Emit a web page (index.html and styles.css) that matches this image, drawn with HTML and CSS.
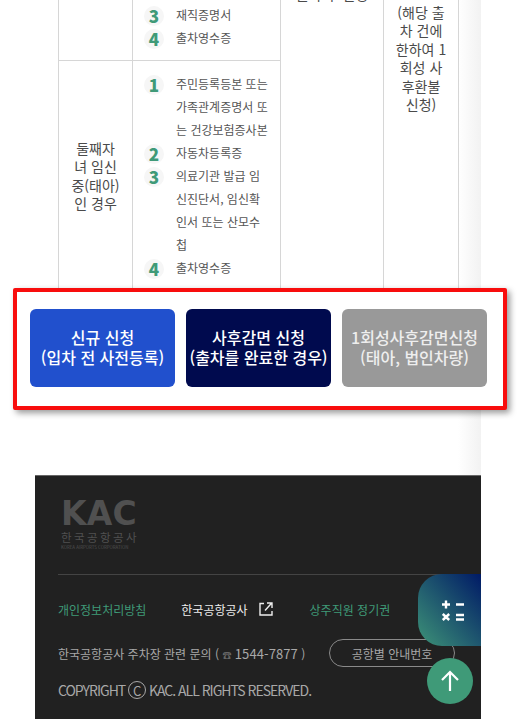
FILE: index.html
```html
<!DOCTYPE html>
<html lang="ko">
<head>
<meta charset="utf-8">
<title>한국공항공사 주차장</title>
<link rel="stylesheet" href="styles.css">
</head>
<body>
<div class="page">
  <main class="main">
    <div class="table-wrap">
      <table class="doc-table">
        <colgroup><col class="c1"><col class="c2"><col class="c3"><col class="c4"></colgroup>
        <tr>
          <td></td>
          <td>
            <ol class="docs">
              <li><b>3</b><span>재직증명서</span></li>
              <li><b>4</b><span>출차영수증</span></li>
            </ol>
          </td>
          <td rowspan="2" class="top"><div class="note-up">출차 후 신청</div></td>
          <td rowspan="2" class="top"><div class="note-refund">(해당 출차 건에 한하여 1회성 사후환불 신청)</div></td>
        </tr>
        <tr>
          <td class="center">둘째자녀 임신중(태아)인 경우</td>
          <td>
            <ol class="docs">
              <li><b>1</b><span>주민등록등본 또는 가족관계증명서 또는 건강보험증사본</span></li>
              <li><b>2</b><span>자동차등록증</span></li>
              <li><b>3</b><span>의료기관 발급 임신진단서, 임신확인서 또는 산모수첩</span></li>
              <li><b>4</b><span>출차영수증</span></li>
            </ol>
          </td>
        </tr>
      </table>
    </div>
    <section class="callout">
      <a class="btn blue">신규 신청<br>(입차 전 사전등록)</a>
      <a class="btn navy">사후감면 신청<br>(출차를 완료한 경우)</a>
      <a class="btn gray">1회성사후감면신청<br>(태아, 법인차량)</a>
    </section>
  </main>
  <footer class="footer">
    <div class="logo">
      <div class="logo-mark">KAC</div>
      <div class="logo-ko">한국공항공사</div>
      <div class="logo-en">KOREA AIRPORTS CORPORATION</div>
    </div>
    <div class="links">
      <a class="green">개인정보처리방침</a>
      <a class="light">한국공항공사
        <svg class="ext" viewBox="0 0 14 14" width="14" height="14" fill="none" stroke="#eee" stroke-width="1.4"><path d="M5 1.500H1V13h12V9"/><path d="M6 8.500 12.500 1.200M8 1h5v5"/></svg>
      </a>
      <a class="green">상주직원 정기권</a>
    </div>
    <div class="contact">
      <span>한국공항공사 주차장 관련 문의 ( <i class="tel">☎</i> <span class="num">1544-7877</span> )</span>
      <a class="pill">공항별 안내번호</a>
    </div>
    <div class="copy">COPYRIGHT <span class="c-mark">C</span> KAC. ALL RIGHTS RESERVED.</div>
  </footer>
  <a class="calc">
    <svg viewBox="0 0 24 21" width="24" height="21" stroke="#fff" stroke-width="2.400" fill="none"><path d="M0 4.500h8M4 .5v8M14 4.500h8M.8 14l6.400 6M7.200 14l-6.400 6M14 15h8M14 19.500h8"/></svg>
  </a>
  <a class="to-top">
    <svg viewBox="0 0 22 22" width="22" height="22" stroke="#fff" stroke-width="2.200" fill="none"><path d="M11 21V2M3 10l8-8 8 8"/></svg>
  </a>
</div>
</body>
</html>
```

FILE: styles.css
```css
* { box-sizing: border-box; }
html, body { margin: 0; padding: 0; background: #fff; }
body { font-family: "Noto Sans CJK KR", "Noto Sans", sans-serif; color: #444; }

.page { position: relative; width: 520px; height: 719px; overflow: hidden; }

.main {
  width: 481px;
  height: 475px;
  background: linear-gradient(to right, #fff, #f2f2f2) no-repeat right top / 23px 100%;
}

.table-wrap { height: 288px; overflow: hidden; padding-left: 58px; width: 459px; }
.doc-table {
  margin-top: -9px;
  width: 401px;
  table-layout: fixed;
  border-collapse: collapse;
  background: #fff;
}
.c1 { width: 74px; }
.c2 { width: 148px; }
.c3 { width: 103px; }
.c4 { width: 75px; }
.doc-table td {
  border: 1px solid #d6d6d6;
  padding: 11px;
  font-size: 14px;
  line-height: 18.4px;
  text-align: center;
  word-break: break-all;
  color: #4a4a4a;
}
.doc-table td.center { vertical-align: middle; }
.doc-table td.top { vertical-align: top; padding-top: 0; }
.note-up { margin-top: -7px; }
.note-refund { margin-top: 11px; }

.docs { list-style: none; margin: 0; padding: 0; text-align: left; }
.docs li { display: flex; font-size: 12px; line-height: 23px; color: #555; }
.docs b {
  flex: none;
  width: 20px;
  height: 20px;
  margin: 3px 12px 0 0;
  border-radius: 50%;
  background: #f6f6f6;
  color: #3f9a78;
  font-size: 17px;
  font-weight: 900;
  line-height: 20px;
  text-align: center;
}

.callout {
  display: flex;
  gap: 11px;
  position: relative;
  width: 494px;
  height: 122px;
  margin-left: 13px;
  padding: 17px 16px 19px 13px;
  background: #fff;
  border: 4px solid #f80d0d;
  border-radius: 2px;
  box-shadow: 3px 3px 6px rgba(0, 0, 0, .4);
}
.btn {
  flex: none;
  display: flex;
  align-items: center;
  justify-content: center;
  width: 145px;
  height: 78px;
  padding-bottom: 2px;
  border-radius: 6px;
  color: #fff;
  font-size: 16px;
  font-weight: 500;
  line-height: 20px;
  text-align: center;
  white-space: nowrap;
}
.btn.blue { background: #2150cd; }
.btn.navy { background: #000a4e; }
.btn.gray { background: #999; color: #eee; }

.footer {
  width: 446px;
  height: 244px;
  margin-left: 35px;
  padding: 24px 23px 0;
  background: #212121;
  border-top: 1px solid #666;
  font-size: 12px;
  color: #a8a8a8;
}
.logo { height: 74px; margin-left: 3px; color: #505050; }
.logo-mark {
  font-family: "DejaVu Sans", sans-serif;
  font-size: 33px;
  font-weight: 700;
  line-height: 28px;
  letter-spacing: .2px;
}
.logo-ko { margin-top: 2px; font-size: 11.500px; line-height: 14px; letter-spacing: 2.400px; white-space: nowrap; }
.logo-en { font-size: 4.400px; line-height: 7px; white-space: nowrap; }

.links {
  display: flex;
  align-items: center;
  height: 69px;
  border-top: 1px solid #444;
}
.links a { white-space: nowrap; }
.green { color: #3f9a78; }
.light { color: #eee; display: flex; align-items: center; margin: 0 37px 0 35px; }
.ext { margin-left: 11px; }

.contact { display: flex; align-items: center; justify-content: space-between; height: 28px; margin-top: -4px; }
.tel { font-style: normal; font-size: 9px; color: #666; }
.num { font-size: 13px; letter-spacing: .1px; }
.pill {
  display: flex;
  align-items: center;
  justify-content: center;
  width: 126px;
  height: 28px;
  margin-right: 3px;
  border: 1px solid #8a8a8a;
  border-radius: 14px;
}

.copy {
  display: flex;
  align-items: center;
  height: 20px;
  margin-top: 13px;
  font-size: 14px;
  letter-spacing: -1px;
  white-space: pre;
}
.c-mark {
  display: inline-flex;
  align-items: center;
  justify-content: center;
  width: 18px;
  height: 18px;
  border: 1px solid #a8a8a8;
  border-radius: 50%;
  font-size: 13px;
  letter-spacing: 0;
}

.calc {
  position: absolute;
  left: 418px;
  top: 574px;
  display: flex;
  align-items: center;
  width: 63px;
  height: 72px;
  padding-left: 24px;
  border-radius: 24px 0 0 24px;
  background: linear-gradient(to bottom left, #001a66, #3d9377);
}
.to-top {
  position: absolute;
  left: 427px;
  top: 658px;
  display: flex;
  align-items: center;
  justify-content: center;
  width: 46px;
  height: 46px;
  border-radius: 50%;
  background: #3f9a78;
}
```
